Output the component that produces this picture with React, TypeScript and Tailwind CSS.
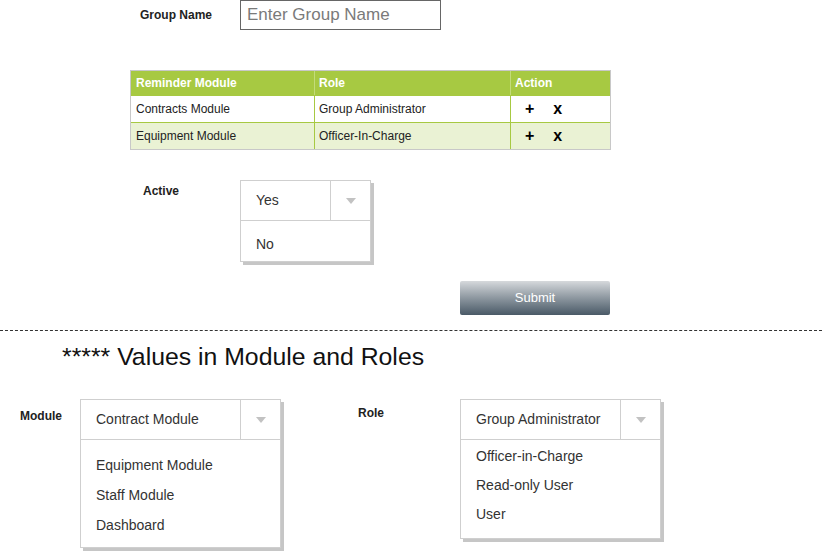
import React from 'react';

const font = { fontFamily: '"Liberation Sans", Arial, sans-serif' };

function Caret() {
  return (
    <svg width="10" height="6" viewBox="0 0 10 6" className="block">
      <path d="M0 0h10L5 6z" fill="#c2c2c2" />
    </svg>
  );
}

interface DropdownProps {
  value: string;
  options: string[];
  width: string;
  headerW: string;
  listClass: string;
  padX: string;
}

function Dropdown({ value, options, width, headerW, listClass, padX }: DropdownProps) {
  return (
    <div className={`${width} bg-white border border-[#cfcfcf] shadow-[3px_3px_0_#c6c6c6]`}>
      <div className="flex h-[40px] border-b border-[#cfcfcf]">
        <div className={`${headerW} ${padX} flex items-center text-[14px] text-[#333] border-r border-[#cfcfcf]`}>
          {value}
        </div>
        <div className="flex-1 flex items-center justify-center">
          <Caret />
        </div>
      </div>
      <div className={listClass}>
        {options.map((o) => (
          <div key={o} className={`${padX} text-[14px] text-[#333] leading-[16px]`}>
            {o}
          </div>
        ))}
      </div>
    </div>
  );
}

const rows = [
  { module: 'Contracts Module', role: 'Group Administrator', bg: 'bg-white' },
  { module: 'Equipment Module', role: 'Officer-In-Charge', bg: 'bg-[#eaf2d4]' },
];

export default function App() {
  return (
    <div className="relative w-[822px] h-[554px] bg-white overflow-hidden" style={font}>
      {/* group name */}
      <div className="flex items-center h-[30px]">
        <div className="ml-[140px] w-[100px] text-[12px] font-bold text-[#222]">Group Name</div>
        <div className="w-[201px] h-[30px] border border-[#666] flex items-center pl-[6px] text-[17px] text-[#7a7a7a]">
          Enter Group Name
        </div>
      </div>

      {/* table */}
      <div className="mt-[40px] ml-[130px] w-[481px] border border-[#c8c8c8] text-[12px]">
        <div className="flex h-[24px] bg-[#a7c942] text-white font-bold">
          <div className="w-[184px] pl-[5px] flex items-center border-r border-[#c3dc7a]">Reminder Module</div>
          <div className="w-[196px] pl-[4px] flex items-center border-r border-[#c3dc7a]">Role</div>
          <div className="flex-1 pl-[4px] flex items-center">Action</div>
        </div>
        {rows.map((r) => (
          <div key={r.module} className={`flex h-[27px] border-t border-[#a7c942] ${r.bg} text-[#222]`}>
            <div className="w-[184px] pl-[5px] flex items-center border-r border-[#a7c942]">{r.module}</div>
            <div className="w-[196px] pl-[4px] flex items-center border-r border-[#a7c942]">{r.role}</div>
            <div className="flex-1 flex items-center pl-[14px] gap-[19px] font-bold text-[16px] text-black">
              <span>+</span>
              <span>x</span>
            </div>
          </div>
        ))}
      </div>

      {/* active */}
      <div className="mt-[30px] flex">
        <div className="ml-[143px] w-[97px] pt-[2px] text-[12px] font-bold text-[#222]">Active</div>
        <div className="w-[131px] bg-white border border-[#cfcfcf] shadow-[3px_3px_0_#c6c6c6]">
          <div className="flex h-[40px] border-b border-[#cfcfcf]">
            <div className="w-[90px] pl-[15px] flex items-center text-[14px] text-[#333] border-r border-[#cfcfcf]">Yes</div>
            <div className="flex-1 flex items-center justify-center">
              <Caret />
            </div>
          </div>
          <div className="h-[40px] pl-[15px] pt-[6px] flex items-center text-[14px] text-[#333]">No</div>
        </div>
      </div>

      {/* submit */}
      <div className="mt-[19px] ml-[460px] w-[150px] h-[34px] rounded-[2px] bg-gradient-to-b from-[#d6d9dc] to-[#4a5a67] flex items-center justify-center text-[13px] text-white">
        Submit
      </div>

      {/* divider */}
      <div className="mt-[15px] border-t border-dashed border-[#333]" />

      <div className="mt-[12px] ml-[62px] text-[24.8px] leading-[28px] text-[#111]">***** Values in Module and Roles</div>

      {/* values */}
      <div className="mt-[28px] flex items-start">
        <div className="ml-[20px] w-[60px] pt-[8px] text-[12px] font-bold text-[#222]">Module</div>
        <Dropdown
          value="Contract Module"
          options={['Equipment Module', 'Staff Module', 'Dashboard']}
          width="w-[201px] h-[149px]"
          headerW="w-[160px]"
          listClass="pt-[17px] flex flex-col gap-[14px]"
          padX="pl-[15px]"
        />
        <div className="ml-[77px] w-[102px] pt-[5px] text-[12px] font-bold text-[#222]">Role</div>
        <Dropdown
          value="Group Administrator"
          options={['Officer-in-Charge', 'Read-only User', 'User']}
          width="w-[201px] h-[140px]"
          headerW="w-[160px]"
          listClass="pt-[8px] flex flex-col gap-[13px]"
          padX="pl-[15px]"
        />
      </div>
    </div>
  );
}
